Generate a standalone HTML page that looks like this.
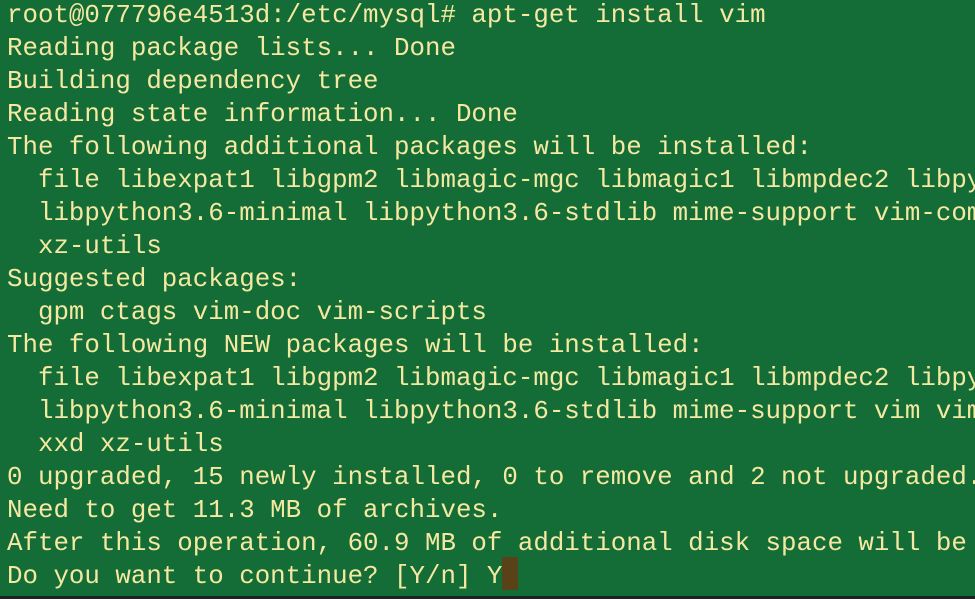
<!DOCTYPE html>
<html><head><meta charset="utf-8"><style>
html,body{margin:0;padding:0;width:975px;height:599px;overflow:hidden;background:#146c37;}
pre{margin:0;position:absolute;left:7px;top:-1px;width:968px;height:600px;overflow:hidden;font-family:"Liberation Mono","DejaVu Sans Mono",monospace;font-size:25.8px;line-height:33px;color:#f5e9a2;white-space:pre;}
.c{display:inline-block;width:15.5px;height:33px;background:#5a4218;vertical-align:top;position:relative;top:-3px;}
.bar{position:absolute;left:0;bottom:0;width:975px;height:3px;background:#1b2420;}
</style></head><body>
<pre>root@077796e4513d:/etc/mysql# apt-get install vim
Reading package lists... Done
Building dependency tree
Reading state information... Done
The following additional packages will be installed:
  file libexpat1 libgpm2 libmagic-mgc libmagic1 libmpdec2 libpython3.6
  libpython3.6-minimal libpython3.6-stdlib mime-support vim-common
  xz-utils
Suggested packages:
  gpm ctags vim-doc vim-scripts
The following NEW packages will be installed:
  file libexpat1 libgpm2 libmagic-mgc libmagic1 libmpdec2 libpython3.6
  libpython3.6-minimal libpython3.6-stdlib mime-support vim vim-common
  xxd xz-utils
0 upgraded, 15 newly installed, 0 to remove and 2 not upgraded.
Need to get 11.3 MB of archives.
After this operation, 60.9 MB of additional disk space will be used.
Do you want to continue? [Y/n] Y<span class="c"></span></pre>
<div class="bar"></div>
</body></html>
